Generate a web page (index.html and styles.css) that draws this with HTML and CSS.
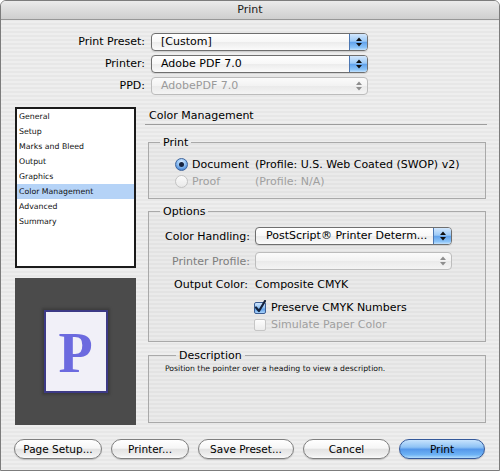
FILE: index.html
```html
<!DOCTYPE html>
<html>
<head>
<meta charset="utf-8">
<title>Print</title>
<link rel="stylesheet" href="styles.css">
</head>
<body>
<div class="window">
  <div class="titlebar">Print</div>

  <div class="presets">
    <span class="plabel">Print Preset:</span>
    <div class="popup popup-active">
      <span class="ptext">[Custom]</span>
      <span class="parrows parrows-blue"><svg width="6" height="10" viewBox="0 0 6 10"><polygon points="0,4 3,0.5 6,4"/><polygon points="0,6 3,9.5 6,6"/></svg></span>
    </div>
    <span class="plabel">Printer:</span>
    <div class="popup popup-active">
      <span class="ptext">Adobe PDF 7.0</span>
      <span class="parrows parrows-blue"><svg width="6" height="10" viewBox="0 0 6 10"><polygon points="0,4 3,0.5 6,4"/><polygon points="0,6 3,9.5 6,6"/></svg></span>
    </div>
    <span class="plabel">PPD:</span>
    <div class="popup popup-disabled">
      <span class="ptext">AdobePDF 7.0</span>
      <span class="parrows"><svg width="6" height="10" viewBox="0 0 6 10"><polygon points="0,4 3,0.5 6,4"/><polygon points="0,6 3,9.5 6,6"/></svg></span>
    </div>
  </div>

  <div class="main">
    <div class="leftcol">
      <ul class="list">
        <li>General</li>
        <li>Setup</li>
        <li>Marks and Bleed</li>
        <li>Output</li>
        <li>Graphics</li>
        <li class="selected">Color Management</li>
        <li>Advanced</li>
        <li>Summary</li>
      </ul>
      <div class="preview">
        <div class="page"><span class="pletter">P</span></div>
      </div>
    </div>

    <div class="rightcol">
      <div class="sechead">Color Management</div>

      <fieldset class="group group-print">
        <legend>Print</legend>
        <div class="radiogrid">
          <div class="radiocell"><span class="radio radio-on"></span><span>Document</span></div>
          <span>(Profile: U.S. Web Coated (SWOP) v2)</span>
          <div class="radiocell dim"><span class="radio radio-off"></span><span>Proof</span></div>
          <span class="dim">(Profile: N/A)</span>
        </div>
      </fieldset>

      <fieldset class="group group-options">
        <legend>Options</legend>
        <div class="optgrid">
          <span class="olabel">Color Handling:</span>
          <div class="popup popup-active">
            <span class="ptext ptext-wide">PostScript® Printer Determ...</span>
            <span class="parrows parrows-blue"><svg width="6" height="10" viewBox="0 0 6 10"><polygon points="0,4 3,0.5 6,4"/><polygon points="0,6 3,9.5 6,6"/></svg></span>
          </div>
          <span class="olabel dimlabel">Printer Profile:</span>
          <div class="popup popup-disabled">
            <span class="ptext"></span>
            <span class="parrows"><svg width="6" height="10" viewBox="0 0 6 10"><polygon points="0,4 3,0.5 6,4"/><polygon points="0,6 3,9.5 6,6"/></svg></span>
          </div>
          <span class="olabel olabel-out">Output Color:</span>
          <span class="ovalue">Composite CMYK</span>
        </div>
        <div class="checks">
          <div class="checkrow">
            <span class="check check-on"><svg class="tick" width="12" height="13" viewBox="0 0 12 13"><path d="M2 7.5 L5 11 L11 1" fill="none" stroke="#14223c" stroke-width="2.2" stroke-linecap="round" stroke-linejoin="round"/></svg></span>
            <span>Preserve CMYK Numbers</span>
          </div>
          <div class="checkrow dim">
            <span class="check check-off"></span>
            <span>Simulate Paper Color</span>
          </div>
        </div>
      </fieldset>

      <fieldset class="group group-desc">
        <legend>Description</legend>
        <p class="desctext">Position the pointer over a heading to view a description.</p>
      </fieldset>
    </div>
  </div>

  <div class="buttons">
    <span class="btn btn-pagesetup">Page Setup...</span>
    <span class="btn btn-printer">Printer...</span>
    <span class="btn btn-save">Save Preset...</span>
    <span class="btn btn-cancel">Cancel</span>
    <span class="btn btn-print">Print</span>
  </div>
</div>
</body>
</html>
```

FILE: styles.css
```css
html, body {
  margin: 0;
  padding: 0;
  background: #ffffff;
}

.window {
  box-sizing: border-box;
  width: 500px;
  height: 471px;
  border: 1px solid #7c7c7c;
  border-top-left-radius: 6px;
  border-top-right-radius: 6px;
  overflow: hidden;
  font-family: "DejaVu Sans", "Liberation Sans", sans-serif;
  font-size: 11px;
  color: #000;
  background: repeating-linear-gradient(to bottom, #eeeeee 0, #eeeeee 2px, #e7e7e7 2px, #e7e7e7 4px);
}

.titlebar {
  height: 18px;
  line-height: 18px;
  text-align: center;
  font-size: 11px;
  color: #1a1a1a;
  background: linear-gradient(#ebebeb, #dcdcdc 50%, #cfcfcf);
  border-bottom: 1px solid #979797;
}

/* top preset rows */
.presets {
  display: grid;
  grid-template-columns: 144px 217px;
  column-gap: 6px;
  row-gap: 4px;
  margin-top: 13px;
  align-items: center;
}

.plabel {
  text-align: right;
  line-height: 18px;
}

.popup {
  box-sizing: border-box;
  height: 18px;
  display: flex;
  align-items: center;
  border: 1px solid #8a8a8a;
  border-radius: 4px;
  overflow: hidden;
  background: linear-gradient(#ffffff, #f7f7f7 50%, #ececec 52%, #fbfbfb);
  box-shadow: 0 1px 1px rgba(0, 0, 0, 0.12);
}

.popup-active {
  border-color: #6f6f6f;
}

.ptext {
  flex: 1;
  padding-left: 9px;
  white-space: nowrap;
  overflow: hidden;
  line-height: 16px;
}

.ptext-wide {
  padding-left: 10px;
}

.parrows {
  width: 17px;
  height: 100%;
  display: flex;
  align-items: center;
  justify-content: center;
  fill: #8e8e8e;
}

.parrows-blue {
  fill: #101010;
  border-left: 1px solid #4c77b2;
  background: linear-gradient(#d2e7fd, #9ccaf7 45%, #62a3ec 52%, #8cc4f8 85%, #c4e2fd);
}

.popup-disabled {
  border-color: #bcbcbc;
  background: linear-gradient(#fbfbfb, #f2f2f2 50%, #eaeaea 52%, #f4f4f4);
  box-shadow: none;
  color: #9a9a9a;
}

/* main area */
.main {
  display: flex;
  gap: 9px;
  margin-top: 12px;
  padding-left: 14px;
}

.leftcol {
  width: 121px;
  display: flex;
  flex-direction: column;
  gap: 10px;
}

.list {
  box-sizing: border-box;
  height: 161px;
  margin: 0;
  padding: 0;
  list-style: none;
  background: #ffffff;
  border: 2px solid #1b1b1b;
}

.list li {
  height: 15px;
  line-height: 15px;
  font-size: 7.8px;
  padding-left: 2px;
  color: #111;
}

.list li.selected {
  background: #b5d3f7;
}

.preview {
  height: 147px;
  background: #4b4b4b;
  display: flex;
  align-items: center;
  justify-content: center;
}

.page {
  box-sizing: border-box;
  width: 64px;
  height: 83px;
  background: #f1f0f8;
  border: 2px solid #3d3a86;
  box-shadow: 0 0 2px 2px #3e3e3e;
  display: flex;
  align-items: center;
  justify-content: center;
}

.pletter {
  font-family: "Liberation Serif", serif;
  font-weight: bold;
  font-size: 56px;
  line-height: 1;
  color: #6c6adf;
  margin-top: 2px;
}

.rightcol {
  width: 342px;
  display: flex;
  flex-direction: column;
}

.sechead {
  height: 17px;
  line-height: 17px;
  padding-left: 4px;
  border-bottom: 1px solid #9c9c9c;
}

.group {
  margin: 0 1px 0 3px;
  padding: 0;
  border: 1px solid #a9a9a9;
  background: rgba(0, 0, 0, 0.015);
  min-width: 0;
}

.group legend {
  margin-left: 11px;
  padding: 0 3px;
  line-height: 13px;
  font-size: 11px;
}

.group-print {
  margin-top: 11px;
  padding: 7px 0 8px 0;
}

.radiogrid {
  display: grid;
  grid-template-columns: 80px auto;
  grid-auto-rows: 17px;
  align-items: center;
  padding-left: 26px;
}

.radiocell {
  display: flex;
  align-items: center;
  gap: 4px;
}

.dim {
  color: #a0a0a0;
}

.radio {
  box-sizing: border-box;
  width: 13px;
  height: 13px;
  border-radius: 50%;
  display: flex;
  align-items: center;
  justify-content: center;
}

.radio-on {
  border: 1px solid #3f659c;
  background: radial-gradient(circle at 50% 30%, #e3f0ff 0, #8fc0f3 45%, #4b88d6 80%, #3a70bb 100%);
}

.radio-on::after {
  content: "";
  width: 5px;
  height: 5px;
  border-radius: 50%;
  background: #16233f;
}

.radio-off {
  border: 1px solid #c3c3c3;
  background: linear-gradient(#fbfbfb, #e9e9e9);
}

.group-options {
  margin-top: 6px;
  padding: 9px 0 8px 0;
}

.optgrid {
  display: grid;
  grid-template-columns: 101px 197px;
  column-gap: 5px;
  grid-template-rows: 18px 18px 15px;
  row-gap: 7px;
  align-items: center;
}

.optgrid > .olabel {
  text-align: right;
}

.olabel-out {
  padding-right: 2px;
}

.dimlabel {
  color: #7e7e7e;
}

.checks {
  margin-top: 7px;
  padding-left: 105px;
}

.checkrow {
  height: 17px;
  display: flex;
  align-items: center;
  gap: 5px;
}

.check {
  box-sizing: border-box;
  width: 12px;
  height: 12px;
  border-radius: 2px;
  position: relative;
}

.check-on {
  border: 1px solid #3c5e94;
  background: linear-gradient(#cfe5fd, #8dc0f4 50%, #5f9fe8 60%, #a9d3fb);
}

.tick {
  position: absolute;
  left: -1px;
  top: -3px;
}

.check-off {
  border: 1px solid #c6c6c6;
  background: linear-gradient(#fdfdfd, #ececec);
}

.group-desc {
  margin-top: 7px;
  padding: 2px 0 48px 16px;
}

.desctext {
  margin: 0;
  font-size: 7.7px;
  line-height: 10px;
  color: #111;
}

/* bottom buttons */
.buttons {
  display: flex;
  gap: 9px;
  margin-top: 14px;
  padding-left: 13px;
}

.btn {
  box-sizing: border-box;
  height: 20px;
  line-height: 18px;
  text-align: center;
  font-size: 10.5px;
  border: 1px solid #7f7f7f;
  border-radius: 10px;
  background: linear-gradient(#ffffff, #f6f6f6 45%, #e3e3e3 52%, #efefef 85%, #fbfbfb);
  box-shadow: 0 1px 1px rgba(0, 0, 0, 0.18);
}

.btn-pagesetup { width: 88px; }
.btn-printer { width: 78px; }
.btn-save { width: 96px; }
.btn-cancel { width: 87px; }
.btn-print {
  width: 86px;
  border-color: #35599a;
  background: linear-gradient(#c6e3fd, #8ec2f5 40%, #5598ea 52%, #6eb3f5 82%, #b4defd);
}
```
